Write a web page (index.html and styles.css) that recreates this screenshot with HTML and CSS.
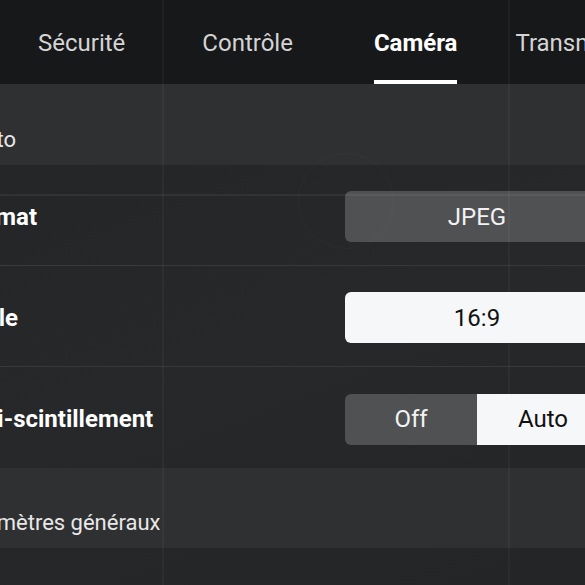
FILE: index.html
```html
<!DOCTYPE html>
<html lang="fr">
<head>
<meta charset="utf-8">
<title>Caméra</title>
<link rel="stylesheet" href="styles.css">
</head>
<body>
<div class="screen">
  <nav class="tabs">
    <span class="tab">Sécurité</span>
    <span class="tab">Contrôle</span>
    <span class="tab tab-active">Caméra</span>
    <span class="tab tab-cut">Transmission</span>
  </nav>

  <div class="group-title"><span class="group-text">Photo</span></div>
  <div class="row">
    <span class="label">Format</span>
    <div class="control btn btn-gray">JPEG</div>
  </div>
  <div class="row">
    <span class="label">Taille</span>
    <div class="control btn btn-white">16:9</div>
  </div>
  <div class="row row-last">
    <span class="label">Anti-scintillement</span>
    <div class="control seg">
      <span class="seg-item seg-off">Off</span>
      <span class="seg-item seg-on">Auto</span>
    </div>
  </div>

  <div class="group-title group-title-2"><span class="group-text group-text-2">Paramètres généraux</span></div>
  <div class="row row-tail"></div>

  <div class="overlay" aria-hidden="true">
    <div class="vline vline-1"></div>
    <div class="vline vline-2"></div>
    <div class="hline hline-1"></div>
    <div class="reticle"></div>
  </div>
</div>
</body>
</html>
```

FILE: styles.css
```css
* { box-sizing: border-box; }

html, body {
  margin: 0;
  padding: 0;
  width: 585px;
  height: 585px;
  overflow: hidden;
  background: #242527;
  font-family: Roboto, "Liberation Sans", sans-serif;
}

.screen {
  position: relative;
  width: 585px;
  height: 585px;
  overflow: hidden;
  background: linear-gradient(160deg, #232426 0%, #26282a 55%, #242527 100%);
}

.tabs {
  height: 84px;
  background: #17181a;
  display: flex;
  align-items: flex-start;
  padding-left: 38px;
  gap: 77px;
  white-space: nowrap;
}

.tab {
  font-size: 24px;
  line-height: 28px;
  padding-top: 29px;
  color: #d4d4d4;
  height: 84px;
  flex: none;
}

.tab-active {
  color: #ffffff;
  font-weight: 700;
  border-bottom: 4px solid #ffffff;
  margin-left: 4px;
}

.tab-cut {
  margin-left: -19px;
}

.group-title {
  height: 81px;
  background: #2f3032;
  display: flex;
  align-items: flex-end;
  padding-bottom: 14px;
}

.group-title-2 {
  height: 80px;
  padding-bottom: 14px;
}

.group-text {
  margin-left: -42px;
  font-size: 22px;
  line-height: 22px;
  color: #e8e8e8;
  white-space: nowrap;
}

.group-text-2 {
  margin-left: -48px;
}

.row {
  height: 101px;
  display: flex;
  align-items: center;
  border-bottom: 1px solid #38393b;
  padding-top: 3px;
}

.row-last {
  border-bottom: none;
}

.row-tail {
  height: 40px;
  border-bottom: none;
}

.label {
  margin-left: -40px;
  width: 385px;
  flex: none;
  font-size: 24px;
  font-weight: 700;
  color: #ffffff;
  white-space: nowrap;
}

.control {
  flex: none;
  width: 264px;
  height: 51px;
  border-radius: 6px;
}

.btn {
  display: flex;
  align-items: center;
  justify-content: center;
  font-size: 24px;
}

.btn-gray {
  background: #4f5153;
  color: #f2f2f2;
}

.btn-white {
  background: #f6f7f9;
  color: #111111;
}

.seg {
  display: flex;
  overflow: hidden;
}

.seg-item {
  flex: 1;
  display: flex;
  align-items: center;
  justify-content: center;
  font-size: 24px;
}

.seg-off {
  background: #4f5153;
  color: #f2f2f2;
}

.seg-on {
  background: #f6f7f9;
  color: #111111;
}

.overlay {
  position: absolute;
  inset: 0;
  pointer-events: none;
}

.vline {
  position: absolute;
  top: 0;
  bottom: 0;
  width: 2px;
  background: rgba(255, 255, 255, 0.035);
}

.vline-1 { left: 162px; }
.vline-2 { left: 508px; }

.hline {
  position: absolute;
  left: 0;
  right: 0;
  height: 2px;
  background: rgba(255, 255, 255, 0.06);
}

.hline-1 { top: 194px; }

.reticle {
  position: absolute;
  left: 298px;
  top: 153px;
  width: 96px;
  height: 96px;
  border-radius: 50%;
  border: 1px solid rgba(255, 255, 255, 0.025);
}
```
